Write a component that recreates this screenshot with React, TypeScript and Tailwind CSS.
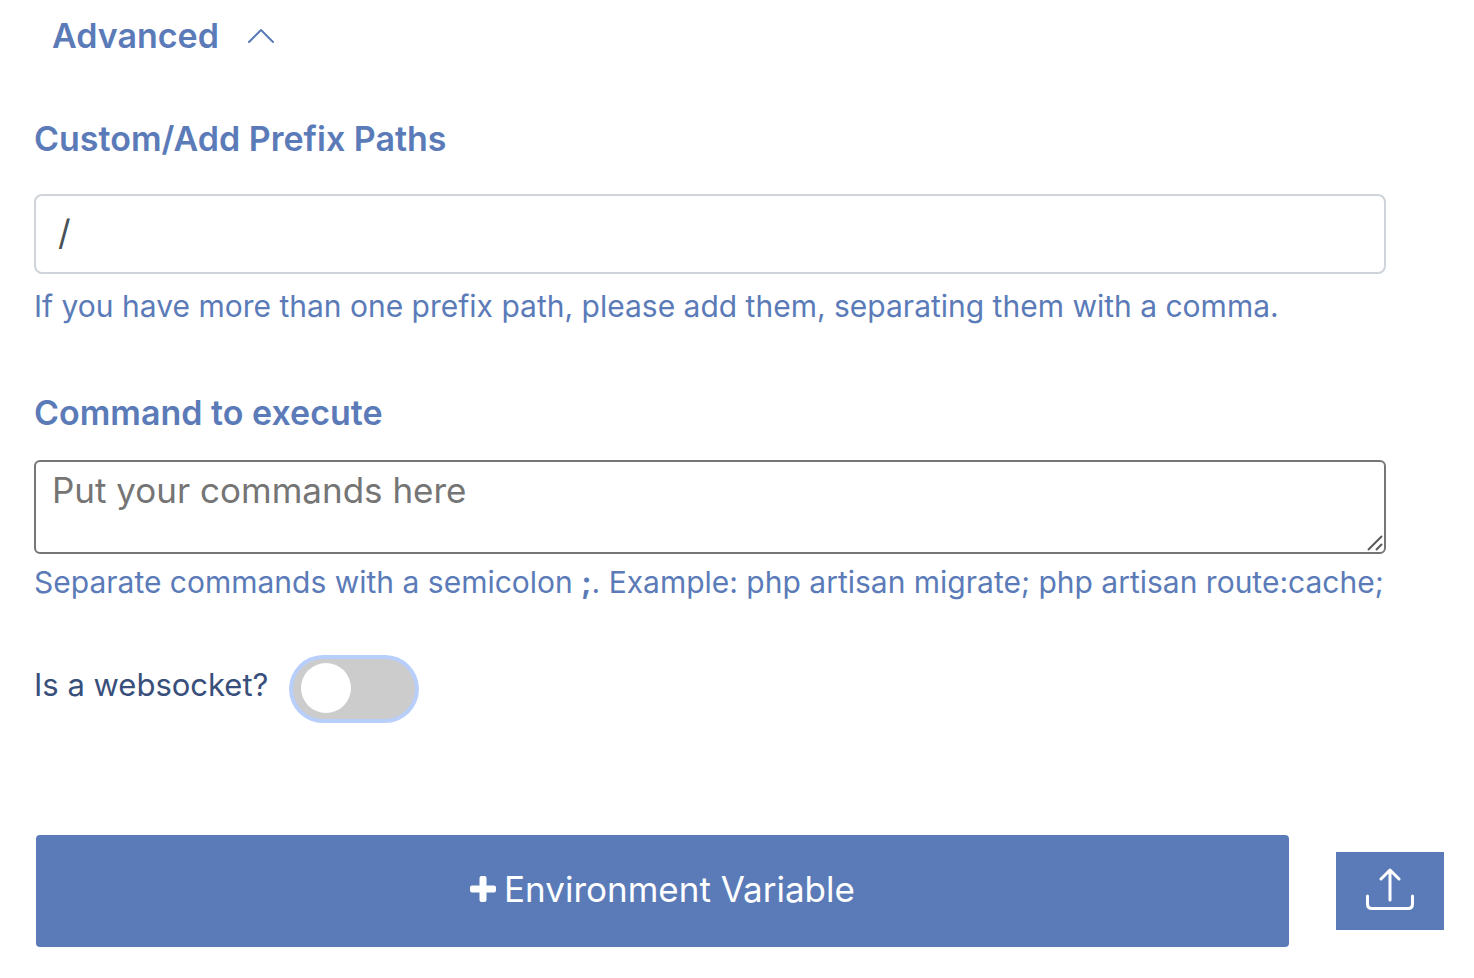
import { useState } from 'react';

export default function App() {
  const [open, setOpen] = useState(true);

  return (
    <main className="bg-white pt-4 pb-8 font-['Inter',sans-serif] text-[#5b7bb8]">
      <button
        type="button"
        aria-expanded={open}
        onClick={() => setOpen(!open)}
        className="flex items-center gap-7 ml-[52px] text-[34px] leading-[40px] font-semibold"
      >
        Advanced
        <svg
          className={open ? 'w-7 h-4' : 'w-7 h-4 rotate-180'}
          viewBox="0 0 28 16"
          fill="none"
          stroke="currentColor"
          strokeWidth="2"
          strokeLinecap="round"
          strokeLinejoin="round"
        >
          <path d="M2 14 14 2l12 12" />
        </svg>
      </button>

      {open && (
        <div className="pl-[34px] pr-[88px] mt-[63px]">
          <label htmlFor="prefix" className="block text-[34px] leading-[40px] font-semibold">
            Custom/Add Prefix Paths
          </label>
          <input
            id="prefix"
            type="text"
            defaultValue="/"
            className="block w-full h-20 mt-[35px] px-[22px] pb-1 border-2 border-[#ced4da] rounded-lg text-[35px] text-[#495057] outline-none"
          />
          <p className="mt-3 text-[30px] leading-[40px]">
            If you have more than one prefix path, please add them, separating them with a comma.
          </p>

          <label htmlFor="command" className="block mt-[67px] text-[34px] leading-[40px] font-semibold">
            Command to execute
          </label>
          <div className="relative mt-[27px]">
            <textarea
              id="command"
              placeholder="Put your commands here"
              className="block w-full h-[94px] px-4 py-2 border-2 border-[#767676] rounded-md text-[35px] leading-[40px] text-[#495057] placeholder:text-[#757575] resize-none outline-none"
            />
            {/* resize grip */}
            <svg
              className="absolute right-[3px] bottom-[3px] w-4 h-4 pointer-events-none"
              viewBox="0 0 16 16"
              fill="none"
              stroke="#5a5a5a"
              strokeWidth="2"
            >
              <path d="M1 15 15 1M9 15l6-6" />
            </svg>
          </div>
          <p className="mt-2 text-[30px] leading-[40px]">
            Separate commands with a semicolon <b>;</b>. Example: php artisan migrate; php artisan route:cache;
          </p>

          <div className="flex items-center gap-[25px] mt-[53px] py-1">
            <label htmlFor="websocket" className="pb-2 text-[31px] leading-[40px] text-[#394f7b]">
              Is a websocket?
            </label>
            <input
              id="websocket"
              type="checkbox"
              role="switch"
              className="relative appearance-none w-[122px] h-[60px] rounded-full bg-[#ccc] ring-4 ring-[#b8cefb] checked:bg-[#5b7bb8] before:absolute before:top-1 before:left-2 before:w-[50px] before:h-[50px] before:rounded-full before:bg-white checked:before:left-16"
            />
          </div>
        </div>
      )}

      <div className="flex items-center gap-[47px] mt-28 pl-9 pr-[30px]">
        <button
          type="button"
          className="flex flex-1 items-center justify-center gap-2 h-28 pb-1 bg-[#5b7bb8] rounded-sm text-[35px] text-white"
        >
          <svg className="w-[26px] h-[26px]" viewBox="0 0 26 26" fill="currentColor">
            <path d="M11.5 0h3q2 0 2 2v7.5H24q2 0 2 2v3q0 2-2 2h-7.5V24q0 2-2 2h-3q-2 0-2-2v-7.5H2q-2 0-2-2v-3q0-2 2-2h7.5V2q0-2 2-2z" />
          </svg>
          Environment Variable
        </button>
        <button
          type="button"
          aria-label="Upload"
          className="flex items-center justify-center w-[108px] h-[78px] pb-1 bg-[#5b7bb8] text-white"
        >
          <svg
            className="w-12 h-[42px]"
            viewBox="0 0 48 42"
            fill="none"
            stroke="currentColor"
            strokeWidth="3"
            strokeLinecap="round"
            strokeLinejoin="round"
          >
            <path d="M24 32V2M15 11l9-9 9 9M1.500 28v8q0 4.500 4.500 4.500h36q4.500 0 4.500-4.500v-8" />
          </svg>
        </button>
      </div>
    </main>
  );
}
